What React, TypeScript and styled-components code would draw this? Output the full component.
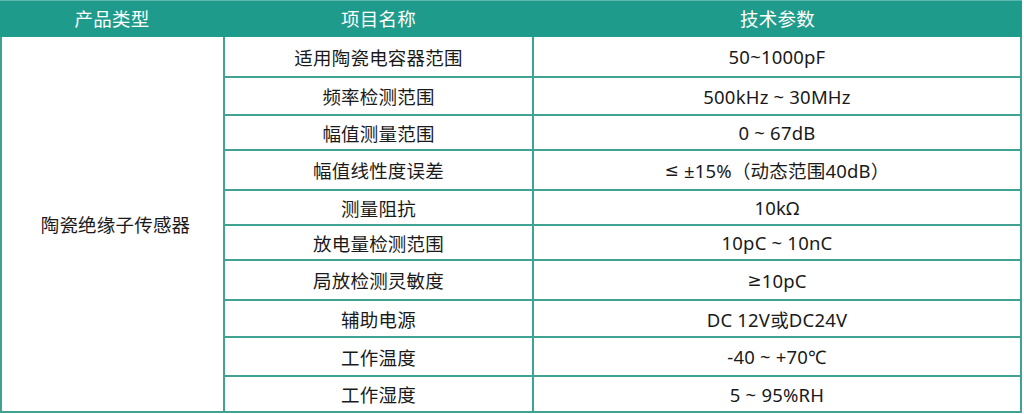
import { Fragment } from "react";
import styled, { createGlobalStyle } from "styled-components";

const GlobalStyle = createGlobalStyle`
    html, body {
        margin: 0;
        padding: 0;
        background: #ffffff;
    }
    body {
        font-family: "Noto Sans", "Noto Sans CJK SC", sans-serif;
    }
`;

interface SpecRow {
    name: string;
    value: React.ReactNode;
    height: number;
}

// the comparison signs come out slanted in the CJK font, so give them a latin one
const Sign = styled.span`
    font-family: "DejaVu Sans", sans-serif;
    font-size: 17px;
`;

const rows: SpecRow[] = [
    { name: "适用陶瓷电容器范围", value: "50~1000pF", height: 39 },
    { name: "频率检测范围", value: "500kHz ~ 30MHz", height: 36 },
    { name: "幅值测量范围", value: "0 ~ 67dB", height: 33 },
    {
        name: "幅值线性度误差",
        value: (
            <>
                <Sign>≤</Sign> ±15%（动态范围40dB）
            </>
        ),
        height: 38,
    },
    { name: "测量阻抗", value: "10kΩ", height: 33 },
    { name: "放电量检测范围", value: "10pC ~ 10nC", height: 33 },
    {
        name: "局放检测灵敏度",
        value: (
            <>
                <Sign>≥</Sign>10pC
            </>
        ),
        height: 38,
    },
    { name: "辅助电源", value: "DC 12V或DC24V", height: 35 },
    { name: "工作温度", value: "-40 ~ +70℃", height: 37 },
    { name: "工作湿度", value: "5 ~ 95%RH", height: 34 },
];

const Table = styled.div`
    width: 1022px;
    display: flex;
    flex-direction: column;
    font-size: 18.5px;
    letter-spacing: 0.2px;
`;

const Header = styled.div`
    display: grid;
    grid-template-columns: 224px 309px 1fr;
    height: 37px;
    background: #1f9b8c;
    border-top: 1px solid #5cb8ad;
    box-sizing: border-box;
    color: #ffffff;
`;

const HeadCell = styled.div`
    display: flex;
    align-items: center;
    justify-content: center;
    padding-bottom: 2px;
`;

const Body = styled.div<{ $rowHeights: string }>`
    display: grid;
    grid-template-columns: 221px 307px 1fr;
    grid-template-rows: ${(p) => p.$rowHeights};
    gap: 2px;
    padding: 0 2px 2px 2px;
    background: #3fa293;
`;

const Cell = styled.div<{ $col: number }>`
    grid-column: ${(p) => p.$col};
    display: flex;
    align-items: center;
    justify-content: center;
    background: #ffffff;
    color: #1a1a1a;
    white-space: pre;
`;

const TypeCell = styled(Cell)<{ $span: number }>`
    grid-row: 1 / span ${(p) => p.$span};
    padding-left: 6px;
`;

export default function App() {
    return (
        <>
            <GlobalStyle />
            <Table>
                <Header>
                    <HeadCell>产品类型</HeadCell>
                    <HeadCell>项目名称</HeadCell>
                    <HeadCell>技术参数</HeadCell>
                </Header>
                <Body $rowHeights={rows.map((r) => `${r.height}px`).join(" ")}>
                    <TypeCell $col={1} $span={rows.length}>
                        陶瓷绝缘子传感器
                    </TypeCell>
                    {rows.map((r) => (
                        <Fragment key={r.name}>
                            <Cell $col={2}>{r.name}</Cell>
                            <Cell $col={3}>{r.value}</Cell>
                        </Fragment>
                    ))}
                </Body>
            </Table>
        </>
    );
}
